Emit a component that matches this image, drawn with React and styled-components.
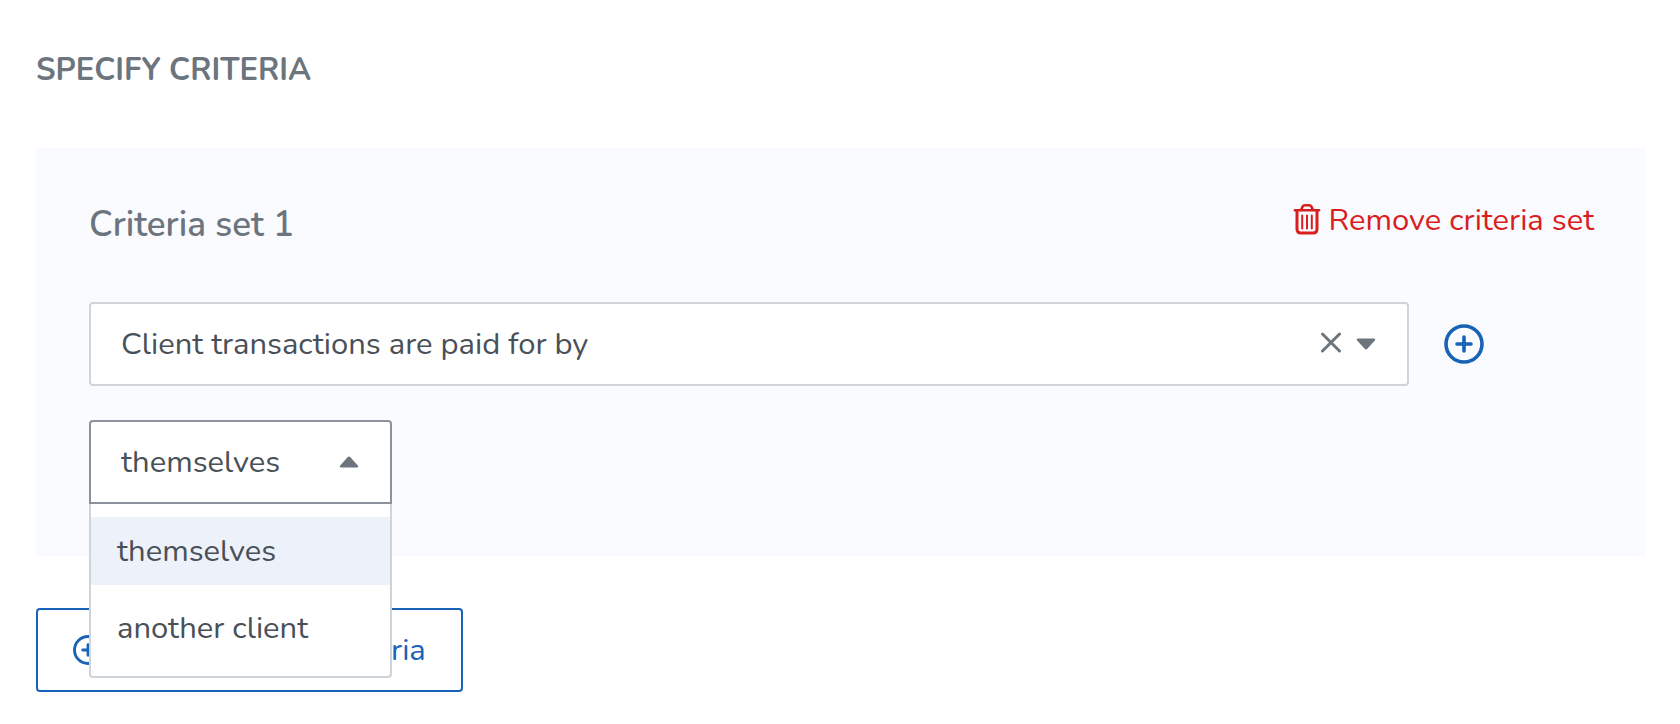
import React, { useState } from 'react';
import styled, { createGlobalStyle, css } from 'styled-components';

const colors = {
  text: '#495057',
  muted: '#6c757d',
  border: '#ced4da',
  active: '#8b929b',
  panel: '#fafbff',
  highlight: '#edf1fa',
  primary: '#1862b7',
  danger: '#d91e1e',
};

const GlobalStyle = createGlobalStyle`
  *, *::before, *::after {
    box-sizing: border-box;
  }

  body {
    margin: 0;
    background: #fff;
    color: ${colors.text};
    font-family: Nunito, Lato, sans-serif;
    font-size: 31px;
    line-height: 40px;
  }

  button, select {
    font: inherit;
    color: inherit;
  }
`;

const Page = styled.main`
  padding: 50px 34px 30px 36px;
`;

const Heading = styled.h2`
  margin: 0 0 58px;
  color: ${colors.muted};
  font-size: 31px;
  font-weight: 700;
  line-height: 40px;
  text-transform: uppercase;
`;

const Panel = styled.section`
  padding: 52px 52px 52px 53px;
  background: ${colors.panel};
`;

const PanelHeader = styled.header`
  display: flex;
  align-items: flex-start;
  justify-content: space-between;
  margin-bottom: 52px;
`;

const PanelTitle = styled.h3`
  margin: 0;
  color: ${colors.muted};
  font-size: 35px;
  font-weight: 600;
  line-height: 50px;
`;

const buttonReset = css`
  display: inline-flex;
  align-items: center;
  padding: 0;
  border: 0;
  background: none;
  cursor: pointer;
`;

const RemoveButton = styled.button`
  ${buttonReset}
  gap: 8px;
  color: ${colors.danger};
`;

const IconButton = styled.button`
  ${buttonReset}
  color: ${({ $primary }) => ($primary ? colors.primary : colors.muted)};
`;

const Row = styled.div`
  display: flex;
  align-items: center;
  gap: 35px;
  margin: 0 110px 34px 0;
`;

// The control and its icons share one grid cell, so the icons sit over the select.
const Field = styled.div`
  position: relative;
  display: grid;
  grid-template-columns: 1fr;
  align-items: center;
  width: ${({ $compact }) => ($compact ? '303px' : 'auto')};
  flex: ${({ $compact }) => ($compact ? 'none' : '1')};

  > select,
  > span {
    grid-area: 1 / 1;
  }
`;

const Select = styled.select`
  width: 100%;
  height: 84px;
  padding: 0 90px 0 30px;
  appearance: none;
  border: 2px solid ${({ $open }) => ($open ? colors.active : colors.border)};
  border-radius: ${({ $open }) => ($open ? '4px 4px 0 0' : '4px')};
  outline: 0;
  background: #fff;
  color: ${colors.text};
  cursor: pointer;
`;

const Indicators = styled.span`
  display: flex;
  align-items: center;
  justify-self: end;
  gap: 14px;
  padding-right: 33px;
  color: ${colors.muted};
  pointer-events: none;

  button {
    pointer-events: auto;
  }
`;

const Menu = styled.ul`
  position: absolute;
  top: 100%;
  left: 0;
  right: 0;
  z-index: 1;
  margin: 0;
  padding: 13px 0 14px;
  border: 2px solid ${colors.border};
  border-top: 0;
  border-radius: 0 0 4px 4px;
  background: #fff;
  list-style: none;
`;

const Option = styled.li`
  padding: 14px 26px;
  background: ${({ $selected }) => ($selected ? colors.highlight : 'transparent')};
  cursor: pointer;

  & + & {
    margin-top: 9px;
  }
`;

const AddButton = styled.button`
  ${buttonReset}
  gap: 8px;
  height: 84px;
  margin-top: 52px;
  padding: 0 35px;
  border: 2px solid ${colors.primary};
  border-radius: 4px;
  color: ${colors.primary};
`;

const TrashIcon = () => (
  <svg width="28" height="34" viewBox="0 0 28 34" fill="none" stroke="currentColor" strokeLinecap="round" aria-hidden="true">
    <path d="M2 7.2H26" strokeWidth="2.6" />
    <path d="M8 7L9.6 3.6Q10.3 2.2 12 2.2H16Q17.7 2.2 18.4 3.6L20 7" strokeWidth="2.6" />
    <path d="M4 8V26Q4 30 8 30H20Q24 30 24 26V8" strokeWidth="3" />
    <path d="M9.2 12.5V25.5M14 12.5V25.5M18.8 12.5V25.5" strokeWidth="2" />
  </svg>
);

const PlusIcon = ({ size, stroke }) => (
  <svg width={size} height={size} viewBox="0 0 40 40" fill="none" stroke="currentColor" strokeLinecap="round" strokeWidth={stroke} aria-hidden="true">
    <circle cx="20" cy="20" r="18" />
    <path d="M20 13V27M13 20H27" />
  </svg>
);

const ClearIcon = () => (
  <svg width="22" height="24" viewBox="0 0 22 24" fill="none" stroke="currentColor" strokeLinecap="round" strokeWidth="3" aria-hidden="true">
    <path d="M2.5 2L19.5 19M19.5 2L2.5 19" />
  </svg>
);

const CaretIcon = ({ up }) => (
  <svg width="20" height="12" viewBox="0 0 20 12" fill="currentColor" aria-hidden="true">
    {up ? (
      <path d="M2 11.5H18Q20 11 18.8 9.4L11.4 1.2Q10 0 8.6 1.2L1.2 9.4Q0 11 2 11.5Z" />
    ) : (
      <path d="M2 .5H18Q20 1 18.8 2.6L11.4 10.8Q10 12 8.6 10.8L1.2 2.6Q0 1 2 .5Z" />
    )}
  </svg>
);

const payers = ['themselves', 'another client'];

const PayerSelect = () => {
  const [open, setOpen] = useState(true);
  const [value, setValue] = useState(payers[0]);

  const toggle = (event) => {
    event.preventDefault();
    setOpen(!open);
  };

  const choose = (payer) => {
    setValue(payer);
    setOpen(false);
  };

  return (
    <Field $compact>
      <Select
        aria-label="Paid for by"
        $open={open}
        value={value}
        onMouseDown={toggle}
        onChange={(event) => choose(event.target.value)}
      >
        {payers.map((payer) => (
          <option key={payer}>{payer}</option>
        ))}
      </Select>
      <Indicators>
        <CaretIcon up={open} />
      </Indicators>
      {open && (
        <Menu role="listbox" aria-label="Paid for by">
          {payers.map((payer) => (
            <Option
              key={payer}
              role="option"
              aria-selected={payer === value}
              $selected={payer === value}
              onClick={() => choose(payer)}
            >
              {payer}
            </Option>
          ))}
        </Menu>
      )}
    </Field>
  );
};

const App = () => {
  const [criterion, setCriterion] = useState('paid');

  return (
    <>
      <GlobalStyle />
      <Page>
        <Heading>Specify criteria</Heading>
        <Panel>
          <PanelHeader>
            <PanelTitle>Criteria set 1</PanelTitle>
            <RemoveButton type="button">
              <TrashIcon />
              Remove criteria set
            </RemoveButton>
          </PanelHeader>
          <Row>
            <Field>
              <Select
                aria-label="Criterion"
                value={criterion}
                onChange={(event) => setCriterion(event.target.value)}
              >
                <option value="" hidden />
                <option value="paid">Client transactions are paid for by</option>
              </Select>
              <Indicators>
                <IconButton type="button" aria-label="Clear" onClick={() => setCriterion('')}>
                  <ClearIcon />
                </IconButton>
                <CaretIcon />
              </Indicators>
            </Field>
            <IconButton $primary type="button" aria-label="Add criterion">
              <PlusIcon size={40} stroke={3.6} />
            </IconButton>
          </Row>
          <PayerSelect />
        </Panel>
        <AddButton type="button">
          <PlusIcon size={30} stroke={3.8} />
          Add new set of criteria
        </AddButton>
      </Page>
    </>
  );
};

export default App;
